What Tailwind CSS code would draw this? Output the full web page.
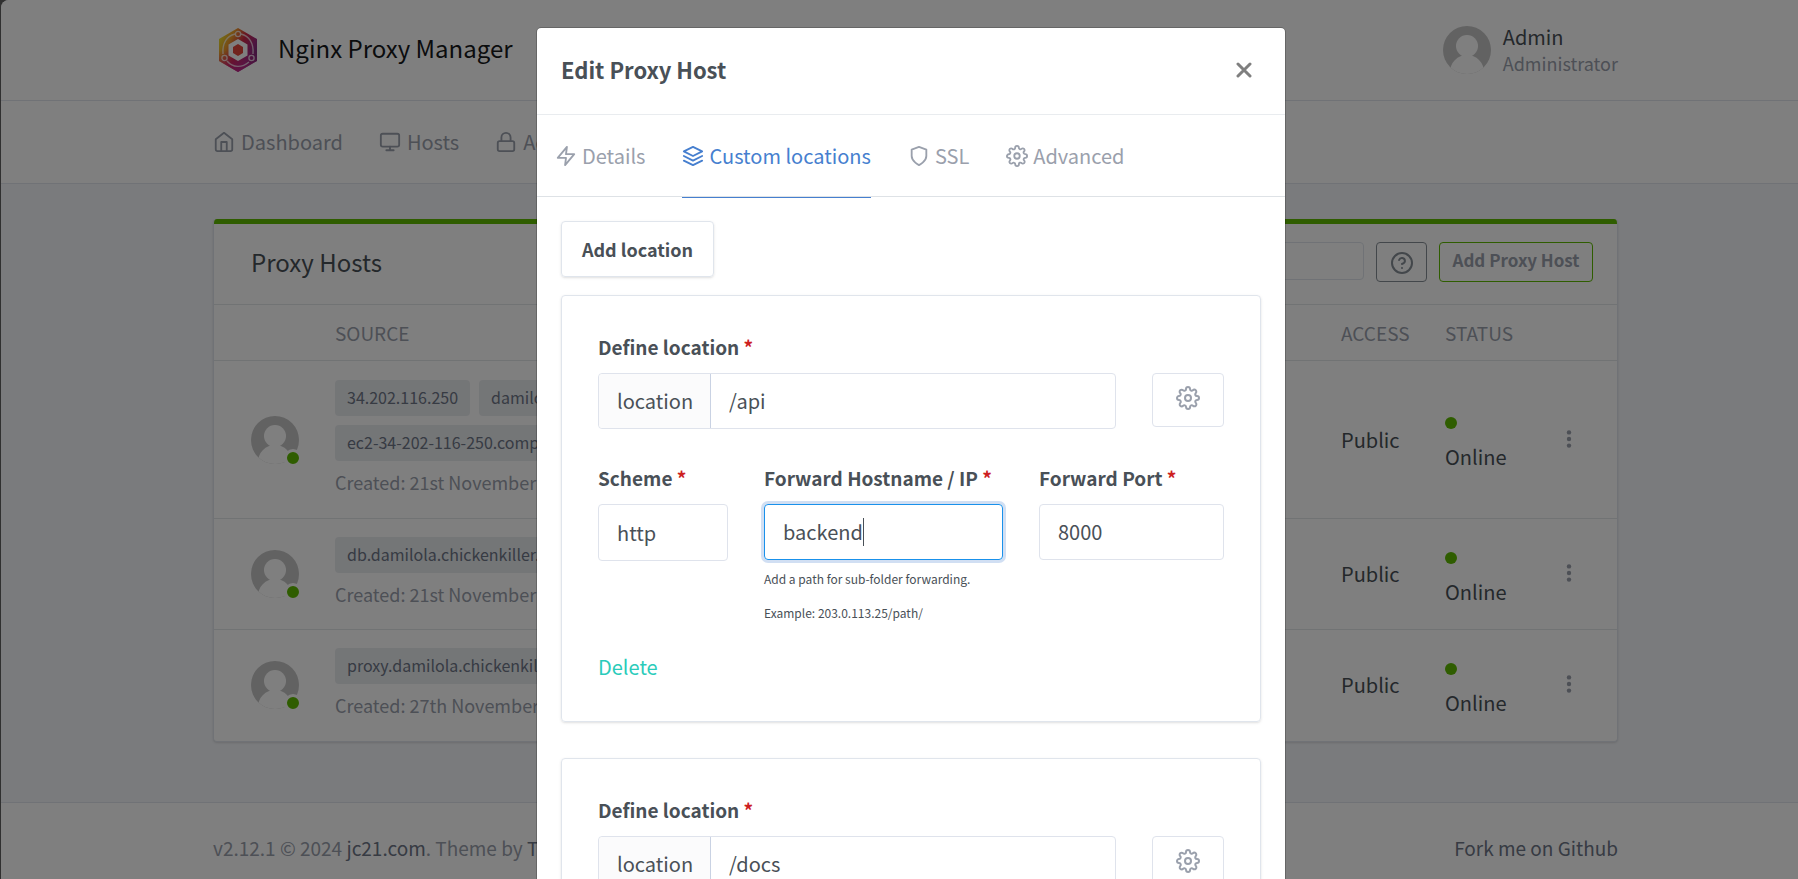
<!DOCTYPE html>
<html lang="en">
<head>
<meta charset="utf-8">
<title>Nginx Proxy Manager</title>
<script src="https://cdn.jsdelivr.net/npm/@tailwindcss/browser@4"></script>
</head>
<body class="h-screen overflow-hidden bg-[#606060] font-['Noto_Sans_CJK_SC','Noto_Sans',sans-serif] text-xl/[34px] text-[#495057]">

<svg class="hidden" aria-hidden="true">
  <symbol id="gear" viewBox="0 0 24 24"><circle cx="12" cy="12" r="3"/><path d="M19.4 15a1.65 1.65 0 0 0 .33 1.82l.06.06a2 2 0 0 1 0 2.83 2 2 0 0 1-2.83 0l-.06-.06a1.65 1.65 0 0 0-1.82-.33 1.65 1.65 0 0 0-1 1.51V21a2 2 0 0 1-2 2 2 2 0 0 1-2-2v-.09A1.65 1.65 0 0 0 9 19.4a1.65 1.65 0 0 0-1.82.33l-.06.06a2 2 0 0 1-2.83 0 2 2 0 0 1 0-2.83l.06-.06a1.65 1.65 0 0 0 .33-1.82 1.65 1.65 0 0 0-1.51-1H3a2 2 0 0 1-2-2 2 2 0 0 1 2-2h.09A1.65 1.65 0 0 0 4.6 9a1.65 1.65 0 0 0-.33-1.82l-.06-.06a2 2 0 0 1 0-2.83 2 2 0 0 1 2.83 0l.06.06a1.65 1.65 0 0 0 1.82.33H9a1.65 1.65 0 0 0 1-1.51V3a2 2 0 0 1 2-2 2 2 0 0 1 2 2v.09a1.65 1.65 0 0 0 1 1.51 1.65 1.65 0 0 0 1.82-.33l.06-.06a2 2 0 0 1 2.83 0 2 2 0 0 1 0 2.83l-.06.06a1.65 1.65 0 0 0-.33 1.82V9a1.65 1.65 0 0 0 1.51 1H21a2 2 0 0 1 2 2 2 2 0 0 1-2 2h-.09a1.65 1.65 0 0 0-1.51 1z"/></symbol>
  <symbol id="person" viewBox="0 0 48 48"><rect width="48" height="48" fill="#c5c5c5"/><circle cx="24" cy="20" r="11" fill="#fff"/><circle cx="24" cy="46" r="17" fill="#fff"/></symbol>
  <symbol id="dots" viewBox="0 0 6 18"><circle cx="3" cy="2.4" r="2.2"/><circle cx="3" cy="9" r="2.2"/><circle cx="3" cy="15.6" r="2.2"/></symbol>
</svg>

<div class="ml-px flex h-full flex-col overflow-hidden rounded-tl-lg bg-[#f5f7fb]">
  <header class="shrink-0 border-b border-[#e0e5ec] bg-white pl-8">
    <div class="mx-auto flex h-[100px] max-w-[1405px] items-center">
      <a href="#" class="flex items-center gap-5 pl-[5px] text-2xl/[34px] text-[#16181b]">
        <svg class="h-11 w-10" viewBox="0 0 40 44">
          <defs>
            <linearGradient id="lg" x1="0" y1=".2" x2="1" y2=".8"><stop offset="0" stop-color="#e8e52d"/><stop offset=".25" stop-color="#f09a2a"/><stop offset=".5" stop-color="#cf2746"/><stop offset=".75" stop-color="#9c2a80"/><stop offset="1" stop-color="#5a2a78"/></linearGradient>
            <linearGradient id="lg2" x1="0" y1="0" x2="0" y2="1"><stop offset=".5" stop-color="#d4267a" stop-opacity="0"/><stop offset="1" stop-color="#c8238f" stop-opacity=".8"/></linearGradient>
          </defs>
          <path d="M20 0 39 11v22L20 44 1 33V11z" fill="url(#lg)"/>
          <path d="M20 0 39 11v22L20 44 1 33V11z" fill="url(#lg2)"/>
          <path d="M17 6 C9 8 4 15 5 26M23 6c8 2 13 9 12 20M9 33c6 7 15 7 22 1" fill="none" stroke="#fff" stroke-opacity=".7" stroke-width="1.4"/>
          <g fill="none" stroke="#fff" stroke-opacity=".75" stroke-width="1.3"><circle cx="20" cy="6" r="2.6"/><circle cx="6.5" cy="30" r="2.6"/><circle cx="33.5" cy="30" r="2.6"/></g>
          <path d="M20 11 29.5 16.500v11L20 33l-9.500-5.500v-11z" fill="#fff"/>
          <path d="M20 16 25 19v6l-5 3-5-3v-6z" fill="#e2473a"/>
        </svg>
        <span class="pb-1">Nginx Proxy Manager</span></a>
      <a href="#" class="ml-auto flex items-center gap-3">
        <svg class="size-12 rounded-full"><use href="#person"/></svg>
        <span class="flex flex-col"><span class="text-xl/[26px]">Admin</span><span class="text-lg/[26px] text-[#9aa0ac]">Administrator</span></span>
      </a>
    </div>
  </header>

  <nav class="shrink-0 border-b border-[#e0e5ec] bg-white pl-8">
    <div class="mx-auto flex h-[82px] max-w-[1405px] items-center gap-9 text-[#9aa0ac]">
      <a href="#" class="flex items-center gap-[6px]"><svg class="size-[22px] fill-none stroke-current stroke-2" viewBox="0 0 24 24" stroke-linecap="round" stroke-linejoin="round"><path d="M3 9l9-7 9 7v11a2 2 0 0 1-2 2H5a2 2 0 0 1-2-2z"/><path d="M9 22V12h6v10"/></svg>Dashboard</a>
      <a href="#" class="flex items-center gap-[6px]"><svg class="size-[22px] fill-none stroke-current stroke-2" viewBox="0 0 24 24" stroke-linecap="round" stroke-linejoin="round"><rect x="2" y="3" width="20" height="14" rx="2"/><path d="M8 21h8M12 17v4"/></svg>Hosts</a>
      <a href="#" class="flex items-center gap-[6px]"><svg class="size-[22px] fill-none stroke-current stroke-2" viewBox="0 0 24 24" stroke-linecap="round" stroke-linejoin="round"><rect x="3" y="11" width="18" height="11" rx="2"/><path d="M7 11V7a5 5 0 0 1 10 0v4"/></svg>Access Lists</a>
    </div>
  </nav>

  <main class="grow pl-8 pt-[35px]">
    <section class="mx-auto max-w-[1405px] overflow-hidden rounded border border-t-0 border-[#e0e5ec] bg-white shadow-sm">
      <div class="h-[5px] bg-[#5eba00]"></div>
      <div class="flex h-20 items-start pl-[37px] pr-6 pt-[18px]">
        <h1 class="mt-[3px] text-2xl/[34px]">Proxy Hosts</h1>
        <input type="text" aria-label="Search Host" class="ml-auto h-[38px] w-[240px] rounded border border-[#e0e5ec] px-3 text-base">
        <button aria-label="Help" class="ml-3 grid h-10 w-[51px] place-items-center rounded border border-[#868e96] pt-0.5 text-[#868e96]"><svg class="size-6 fill-none stroke-current stroke-2" viewBox="0 0 24 24" stroke-linecap="round" stroke-linejoin="round"><circle cx="12" cy="12" r="10"/><path d="M9.090 9a3 3 0 0 1 5.830 1c0 2-3 3-3 3M12 17h.01"/></svg></button>
        <button class="ml-3 h-10 w-[154px] rounded border border-[#5eba00] pb-1 text-[17px]/[34px] font-bold text-[#9aa0ac]">Add Proxy Host</button>
      </div>
      <table class="w-full table-fixed text-left">
        <colgroup><col class="w-[109px]"><col><col class="w-[280px]"><col class="w-[180px]"><col class="w-[104px]"><col class="w-[88px]"><col class="w-[96px]"></colgroup>
        <thead>
          <tr class="h-14 border-t border-[#e3e6e9] text-[19px]/[26px] text-[#9aa0ac]">
            <th></th><th class="px-3 font-normal">SOURCE</th><th class="px-3 font-normal">DESTINATION</th><th class="px-3 font-normal">SSL</th><th class="px-3 font-normal">ACCESS</th><th class="px-3 font-normal">STATUS</th><th></th>
          </tr>
        </thead>
        <tbody>
          <tr class="h-[158px] border-t border-[#e3e6e9]">
            <td class="pl-[37px]"><div class="relative size-12"><svg class="size-12 rounded-full"><use href="#person"/></svg><span class="absolute -bottom-[3px] -right-[3px] size-[18px] rounded-full border-3 border-white bg-[#5eba00]"></span></div></td>
            <td class="px-3"><div class="flex flex-wrap gap-[9px] text-base/[34px] text-[#6e7687]"><a href="#" class="rounded bg-[#e9ecef] px-3 pb-0.5">34.202.116.250</a><a href="#" class="rounded bg-[#e9ecef] px-3 pb-0.5">damilola.chickenkiller.com</a><a href="#" class="rounded bg-[#e9ecef] px-3 pb-0.5">ec2-34-202-116-250.compute-1.amazonaws.com</a></div><div class="mt-[6px] pb-0.5 text-lg/[30px] text-[#9aa0ac]">Created: 21st November 2024</div></td>
            <td class="px-3">http://frontend:80</td><td class="px-3">Let's Encrypt</td><td class="px-3">Public</td>
            <td class="px-3 pt-3"><span class="block size-3 rounded-full bg-[#5eba00]"></span><span class="block pt-[11px]">Online</span></td>
            <td class="text-center"><button aria-label="Actions"><svg class="h-[18px] w-[6px] fill-[#9aa0ac]"><use href="#dots"/></svg></button></td>
          </tr>
          <tr class="h-[111px] border-t border-[#e3e6e9]">
            <td class="pl-[37px]"><div class="relative size-12"><svg class="size-12 rounded-full"><use href="#person"/></svg><span class="absolute -bottom-[3px] -right-[3px] size-[18px] rounded-full border-3 border-white bg-[#5eba00]"></span></div></td>
            <td class="px-3"><div class="flex text-base/[34px] text-[#6e7687]"><a href="#" class="rounded bg-[#e9ecef] px-3 pb-0.5">db.damilola.chickenkiller.com</a></div><div class="mt-[6px] pb-0.5 text-lg/[30px] text-[#9aa0ac]">Created: 21st November 2024</div></td>
            <td class="px-3">http://adminer:8080</td><td class="px-3">Let's Encrypt</td><td class="px-3">Public</td>
            <td class="px-3 pt-3"><span class="block size-3 rounded-full bg-[#5eba00]"></span><span class="block pt-[11px]">Online</span></td>
            <td class="text-center"><button aria-label="Actions"><svg class="h-[18px] w-[6px] fill-[#9aa0ac]"><use href="#dots"/></svg></button></td>
          </tr>
          <tr class="h-[111px] border-t border-[#e3e6e9]">
            <td class="pl-[37px]"><div class="relative size-12"><svg class="size-12 rounded-full"><use href="#person"/></svg><span class="absolute -bottom-[3px] -right-[3px] size-[18px] rounded-full border-3 border-white bg-[#5eba00]"></span></div></td>
            <td class="px-3"><div class="flex text-base/[34px] text-[#6e7687]"><a href="#" class="rounded bg-[#e9ecef] px-3 pb-0.5">proxy.damilola.chickenkiller.com</a></div><div class="mt-[6px] pb-0.5 text-lg/[30px] text-[#9aa0ac]">Created: 27th November 2024</div></td>
            <td class="px-3">http://proxy:81</td><td class="px-3">Let's Encrypt</td><td class="px-3">Public</td>
            <td class="px-3 pt-3"><span class="block size-3 rounded-full bg-[#5eba00]"></span><span class="block pt-[11px]">Online</span></td>
            <td class="text-center"><button aria-label="Actions"><svg class="h-[18px] w-[6px] fill-[#9aa0ac]"><use href="#dots"/></svg></button></td>
          </tr>
        </tbody>
      </table>
    </section>
  </main>

  <footer class="shrink-0 border-t border-[#e0e5ec] bg-white pl-8">
    <div class="mx-auto flex h-[76px] max-w-[1405px] items-start justify-between pt-7 text-[19px]/[34px] text-[#9aa0ac]">
      <p>v2.12.1 © 2024 <a href="#" class="text-[#6e7687]">jc21.com</a>. Theme by <a href="#" class="text-[#6e7687]">Tabler</a></p>
      <a href="#" class="text-[#6e7687]">Fork me on Github</a>
    </div>
  </footer>
</div>

<div class="fixed inset-0 overflow-hidden bg-black/50 pl-6 pt-7">
  <div role="dialog" aria-labelledby="dialog-title" class="mx-auto max-w-[748px] rounded bg-white outline outline-black/20">
    <div class="flex h-[86px] items-center justify-between pb-0.5 pl-6 pr-[33px]">
      <h2 id="dialog-title" class="pb-0.5 text-[22px]/[34px] font-bold">Edit Proxy Host</h2>
      <button aria-label="Close"><svg class="size-4 stroke-[#7f7f7f] stroke-3" viewBox="0 0 16 16" stroke-linecap="round"><path d="M2 2l12 12M14 2L2 14"/></svg></button>
    </div>
    <div role="tablist" class="flex h-[83px] gap-[37px] border-y border-t-[#e9ecef] border-b-[#dee2e6] pl-[18px] text-[#9aa0ac]">
      <button role="tab" class="flex items-center gap-[5px]"><svg class="size-[22px] fill-none stroke-current stroke-2" viewBox="0 0 24 24" stroke-linecap="round" stroke-linejoin="round"><path d="M13 2 3 14h9l-1 8 10-12h-9z"/></svg>Details</button>
      <button role="tab" aria-selected="true" class="-mb-[2px] flex items-center gap-[5px] border-b border-[#467fcf] text-[#467fcf]"><svg class="size-[22px] fill-none stroke-current stroke-2" viewBox="0 0 24 24" stroke-linecap="round" stroke-linejoin="round"><path d="M12 2 2 7l10 5 10-5zM2 17l10 5 10-5M2 12l10 5 10-5"/></svg>Custom locations</button>
      <button role="tab" class="flex items-center gap-[5px]"><svg class="size-[22px] fill-none stroke-current stroke-2" viewBox="0 0 24 24" stroke-linecap="round" stroke-linejoin="round"><path d="M12 22s8-4 8-10V5l-8-3-8 3v7c0 6 8 10 8 10z"/></svg>SSL</button>
      <button role="tab" class="flex items-center gap-[5px]"><svg class="size-[22px] fill-none stroke-current stroke-2" stroke-linecap="round" stroke-linejoin="round"><use href="#gear"/></svg>Advanced</button>
    </div>
    <div class="px-6 pt-6">
      <button class="h-14 min-w-[153px] rounded border border-[#e0e5ec] px-[18px] text-lg font-bold shadow-sm">Add location</button>

      <section class="mt-[18px] h-[427px] rounded border border-[#e0e5ec] px-9 pt-[34px] shadow-sm">
        <label for="loc1" class="block pb-[9px] text-[19px]/[34px] font-bold">Define location <span class="text-[#cd201f]">*</span></label>
        <div class="flex items-start gap-9">
          <div class="flex h-14 grow rounded border border-[#dfe3ec]">
            <span class="flex items-center rounded-l border-r border-[#c9d2e3] bg-[#fbfbfc] pl-[18px] pr-[17px]">location</span>
            <input id="loc1" value="/api" class="min-w-0 grow px-[18px] outline-none">
          </div>
          <button aria-label="Location settings" class="grid h-[54px] w-[72px] place-items-center rounded border border-[#dfe3ec] pb-1 text-[#9aa0ac]"><svg class="size-6 fill-none stroke-current stroke-2" stroke-linecap="round" stroke-linejoin="round"><use href="#gear"/></svg></button>
        </div>
        <div class="mt-8 grid grid-cols-[130fr_239fr_185fr] items-start gap-x-9">
          <div>
            <label for="scheme" class="block pb-[9px] text-[19px]/[34px] font-bold">Scheme <span class="text-[#cd201f]">*</span></label>
            <select id="scheme" class="h-[57px] w-full appearance-none rounded border border-[#dfe3ec] px-[18px]"><option>http</option><option>https</option></select>
          </div>
          <div>
            <label for="host" class="block pb-[9px] text-[19px]/[34px] font-bold">Forward Hostname / IP <span class="text-[#cd201f]">*</span></label>
            <div class="relative">
              <input id="host" value="backend" class="block h-14 w-full rounded border border-[#1991eb] px-[18px] pb-0.5 caret-transparent ring-3 ring-[#467fcf]/25 outline-none">
              <span class="absolute left-[99px] top-[14px] h-7 w-px bg-[#495057]"></span>
            </div>
            <p class="pt-0.5 text-xs/[34px]">Add a path for sub-folder forwarding.<br>Example: 203.0.113.25/path/</p>
          </div>
          <div>
            <label for="port" class="block pb-[9px] text-[19px]/[34px] font-bold">Forward Port <span class="text-[#cd201f]">*</span></label>
            <input id="port" value="8000" class="h-14 w-full rounded border border-[#dfe3ec] px-[18px] pb-0.5 outline-none">
          </div>
        </div>
        <a href="#" class="mt-5 inline-block text-[#2bcbba]">Delete</a>
      </section>

      <section class="mt-9 h-[427px] rounded border border-[#e0e5ec] px-9 pt-[34px] shadow-sm">
        <label for="loc2" class="block pb-[9px] text-[19px]/[34px] font-bold">Define location <span class="text-[#cd201f]">*</span></label>
        <div class="flex items-start gap-9">
          <div class="flex h-14 grow rounded border border-[#dfe3ec]">
            <span class="flex items-center rounded-l border-r border-[#c9d2e3] bg-[#fbfbfc] pl-[18px] pr-[17px]">location</span>
            <input id="loc2" value="/docs" class="min-w-0 grow px-[18px] outline-none">
          </div>
          <button aria-label="Location settings" class="grid h-[54px] w-[72px] place-items-center rounded border border-[#dfe3ec] pb-1 text-[#9aa0ac]"><svg class="size-6 fill-none stroke-current stroke-2" stroke-linecap="round" stroke-linejoin="round"><use href="#gear"/></svg></button>
        </div>
      </section>
    </div>
  </div>
</div>
</body>
</html>
